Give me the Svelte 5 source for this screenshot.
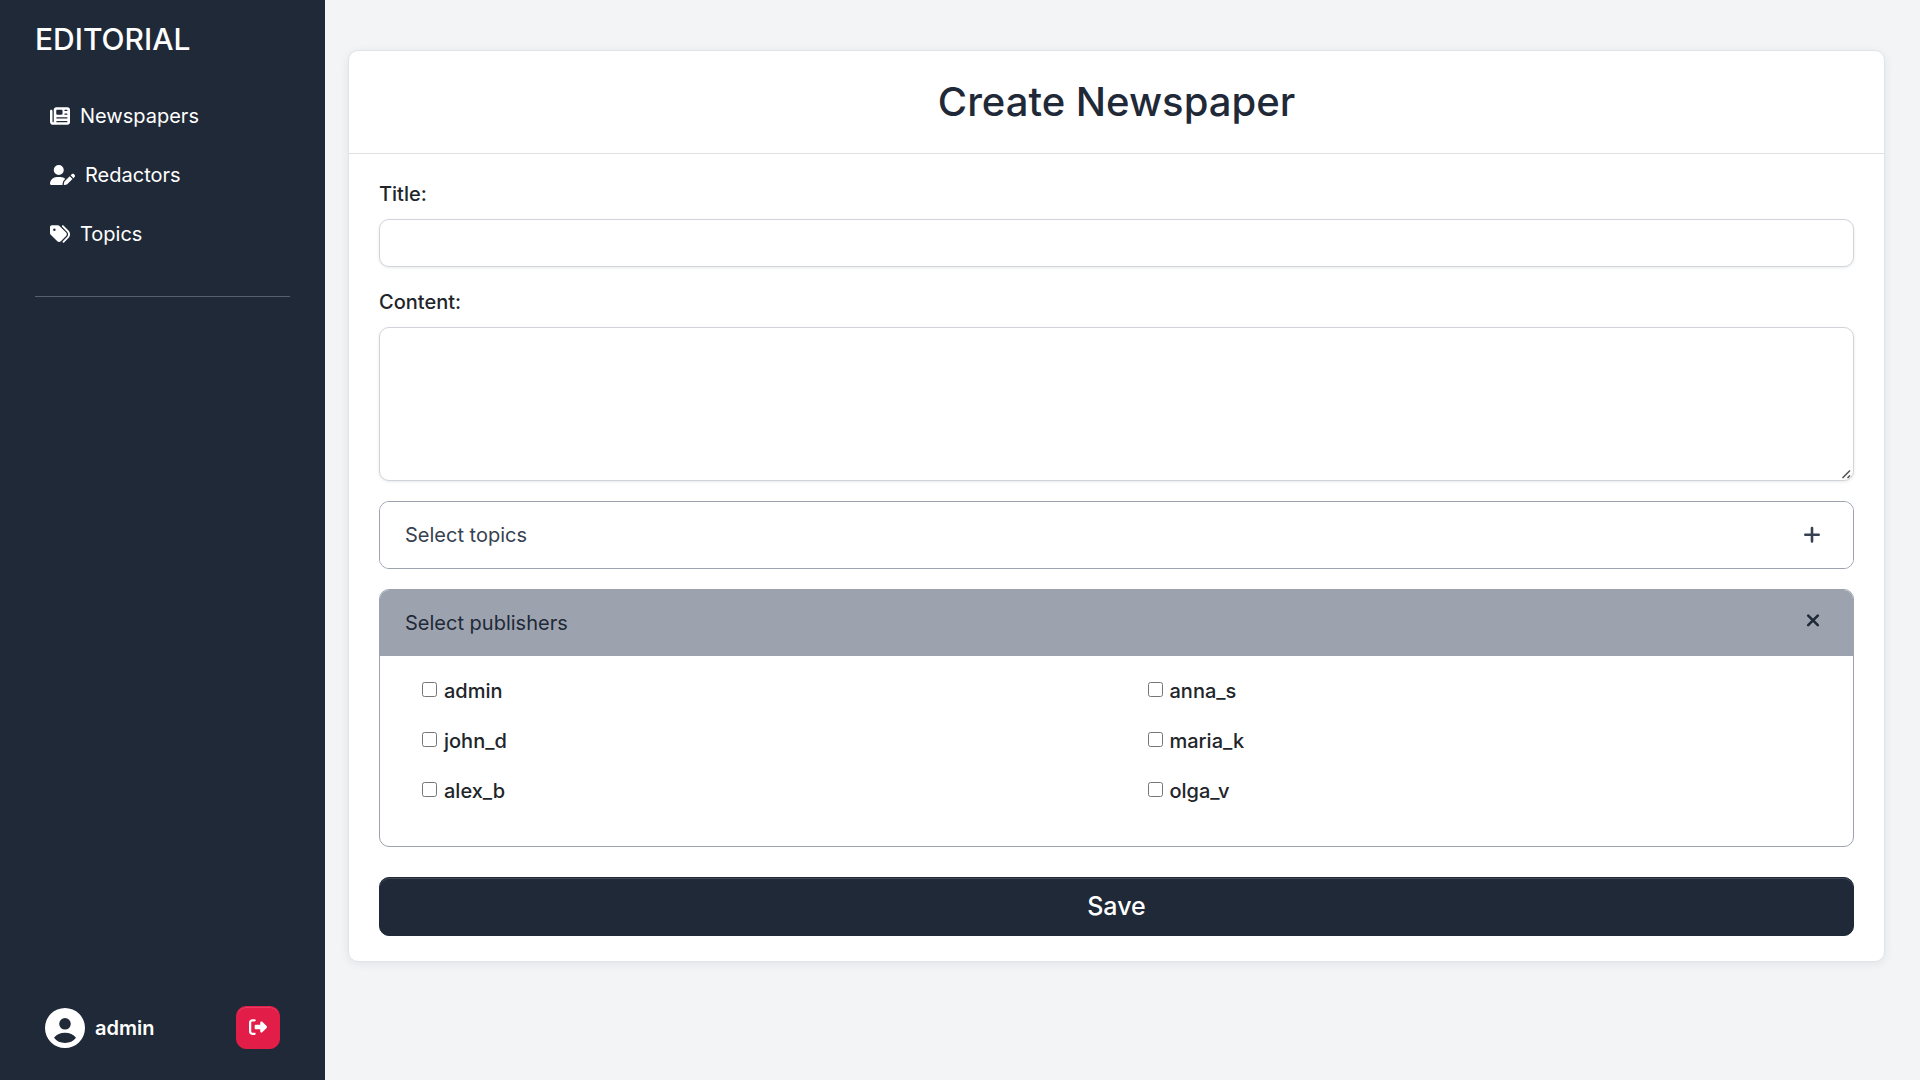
<script>
  const links = [
    { label: 'Newspapers', icon: 'newspaper', box: '0 0 512 512' },
    { label: 'Redactors', icon: 'userPen', box: '0 0 640 512' },
    { label: 'Topics', icon: 'tags', box: '0 0 512 512' }
  ];
  const paths = {
    newspaper:
      'M96 96c0-35.3 28.7-64 64-64H448c35.3 0 64 28.7 64 64V416c0 35.3-28.7 64-64 64H80c-44.2 0-80-35.8-80-80V128c0-17.7 14.3-32 32-32s32 14.3 32 32V400c0 8.8 7.2 16 16 16s16-7.2 16-16V96zm64 24v80c0 13.3 10.7 24 24 24H296c13.3 0 24-10.7 24-24V120c0-13.3-10.7-24-24-24H184c-13.3 0-24 10.7-24 24zm208-8c0 8.8 7.2 16 16 16h48c8.8 0 16-7.2 16-16s-7.2-16-16-16H384c-8.8 0-16 7.2-16 16zm0 96c0 8.8 7.2 16 16 16h48c8.8 0 16-7.2 16-16s-7.2-16-16-16H384c-8.8 0-16 7.2-16 16zM160 304c0 8.8 7.2 16 16 16H432c8.8 0 16-7.2 16-16s-7.2-16-16-16H176c-8.8 0-16 7.2-16 16zm0 96c0 8.8 7.2 16 16 16H432c8.8 0 16-7.2 16-16s-7.2-16-16-16H176c-8.8 0-16 7.2-16 16z',
    userPen:
      'M224 256A128 128 0 1 0 224 0a128 128 0 1 0 0 256zm-45.7 48C79.8 304 0 383.8 0 482.3C0 498.7 13.3 512 29.7 512H322.8c-3.1-8.8-3.7-18.4-1.4-27.8l15-60.1c2.8-11.3 8.6-21.5 16.8-29.7l40.3-40.3c-32.1-31-75.7-50.1-123.9-50.1H178.3zm435.5-68.3c-15.6-15.6-40.9-15.6-56.6 0l-29.4 29.4 71 71 29.4-29.4c15.6-15.6 15.6-40.9 0-56.6l-14.4-14.4zM375.9 417c-4.1 4.1-7 9.2-8.4 14.9l-15 60.1c-1.4 5.5 .2 11.2 4.2 15.2s9.7 5.6 15.2 4.2l60.1-15c5.6-1.4 10.8-4.3 14.9-8.4L576.1 358.7l-71-71L375.9 417z',
    tags:
      'M345 39.1L472.8 168.4c52.4 53 52.4 138.2 0 191.2L360.8 472.9c-9.3 9.4-24.5 9.5-33.9 .2s-9.5-24.5-.2-33.9L438.6 325.9c33.9-34.3 33.9-89.4 0-123.7L310.9 72.9c-9.3-9.4-9.2-24.6 .2-33.9s24.6-9.2 33.9 .2zM0 229.5V80C0 53.5 21.5 32 48 32H197.5c17 0 33.3 6.7 45.3 18.7l168 168c25 25 25 65.5 0 90.5L277.3 442.7c-25 25-65.5 25-90.5 0l-168-168C6.7 262.7 0 246.5 0 229.5zM144 144a32 32 0 1 0 -64 0 32 32 0 1 0 64 0z'
  };
  const publishers = ['admin', 'anna_s', 'john_d', 'maria_k', 'alex_b', 'olga_v'];
  let publishersOpen = $state(true);
</script>

<div class="app">
  <aside class="sidebar">
    <a class="brand" href="#home">EDITORIAL</a>
    <nav>
      {#each links as link}
        <a href={'#' + link.label.toLowerCase()}>
          <svg class:wide={link.icon === 'userPen'} viewBox={link.box} aria-hidden="true"><path d={paths[link.icon]} /></svg>
          <span>{link.label}</span>
        </a>
      {/each}
    </nav>
    <hr />
    <div class="account">
      <a class="user" href="#profile">
        <svg viewBox="0 0 40 40" aria-hidden="true">
          <path fill-rule="evenodd" d="M20 0a20 20 0 1 0 0 40a20 20 0 1 0 0-40zM20 10a5.8 5.8 0 1 1 0 11.6a5.8 5.8 0 1 1 0-11.6zM9 29.8C11.6 26.4 15.5 24.8 20 24.8S28.4 26.4 31 29.8C28.4 33.2 24.6 35 20 35S11.6 33.2 9 29.8z" />
        </svg>
        <span>admin</span>
      </a>
      <button class="logout" type="button" aria-label="Log out">
        <svg viewBox="0 0 512 512" aria-hidden="true">
          <path d="M377.9 105.9L500.7 228.7c7.2 7.2 11.3 17.1 11.3 27.3s-4.1 20.1-11.3 27.3L377.9 406.1c-6.4 6.4-15 9.9-24 9.9c-18.7 0-33.9-15.2-33.9-33.9l0-62.1-128 0c-17.7 0-32-14.3-32-32l0-64c0-17.7 14.3-32 32-32l128 0 0-62.1c0-18.7 15.2-33.9 33.9-33.9c9 0 17.6 3.6 24 9.9zM160 96L96 96c-17.7 0-32 14.3-32 32l0 256c0 17.7 14.3 32 32 32l64 0c17.7 0 32 14.3 32 32s-14.3 32-32 32l-64 0c-53 0-96-43-96-96L0 128C0 75 43 32 96 32l64 0c17.7 0 32 14.3 32 32s-14.3 32-32 32z" />
        </svg>
      </button>
    </div>
  </aside>

  <main>
    <section class="card">
      <header><h1>Create Newspaper</h1></header>
      <form onsubmit={(e) => e.preventDefault()}>
        <div class="field">
          <label for="title">Title:</label>
          <input id="title" class="control" type="text" />
        </div>
        <div class="field">
          <label for="content">Content:</label>
          <textarea id="content" class="control"></textarea>
        </div>
        <div class="panel">
          <button class="toggle" type="button" aria-expanded="false">
            <span>Select topics</span>
            <svg viewBox="0 0 26 26" aria-hidden="true"><path d="M13 6v13.4M6.3 12.7h13.4" /></svg>
          </button>
        </div>
        <div class="panel">
          <button class="toggle" class:open={publishersOpen} type="button" aria-expanded={publishersOpen} onclick={() => (publishersOpen = !publishersOpen)}>
            <span>Select publishers</span>
            <svg viewBox="0 0 26 26" aria-hidden="true">
              <path d={publishersOpen ? 'M9.2 5.6l9.6 9.6M18.8 5.6l-9.6 9.6' : 'M13 6v13.4M6.3 12.7h13.4'} />
            </svg>
          </button>
          {#if publishersOpen}
            <div class="options">
              {#each publishers as name}
                <label><input type="checkbox" value={name} /> {name}</label>
              {/each}
            </div>
          {/if}
        </div>
        <button class="save" type="submit">Save</button>
      </form>
    </section>
  </main>
</div>

<style>
  :global(body) {
    margin: 0;
    background: #f2f4f6;
  }
  .app,
  .app * {
    box-sizing: border-box;
  }
  .app {
    display: flex;
    min-height: 100vh;
    font: 400 20px/30px Inter, sans-serif;
    color: #212529;
  }
  button {
    font: inherit;
    cursor: pointer;
  }
  a {
    color: #fff;
    text-decoration: none;
  }
  .sidebar {
    flex: none;
    display: flex;
    flex-direction: column;
    width: 325px;
    padding: 20px 35px 31px;
    background: #1f2937;
  }
  .brand {
    font-size: 30px;
    line-height: 38px;
    font-weight: 500;
  }
  nav {
    display: flex;
    flex-direction: column;
    gap: 5px;
    margin-top: 31px;
  }
  nav a {
    display: flex;
    align-items: center;
    gap: 10px;
    padding: 12px 15px;
  }
  svg {
    fill: currentColor;
    flex: none;
  }
  nav svg {
    width: 20px;
    height: 20px;
  }
  nav svg.wide {
    width: 25px;
  }
  hr {
    width: 100%;
    height: 1px;
    margin: 35px 0 0;
    border: 0;
    background: #56606e;
  }
  .account {
    display: flex;
    align-items: center;
    justify-content: space-between;
    margin-top: auto;
    padding: 0 10px;
  }
  .user {
    display: flex;
    align-items: center;
    gap: 10px;
    font-weight: 600;
  }
  .user svg {
    width: 40px;
    height: 40px;
  }
  .logout {
    display: grid;
    place-items: center;
    width: 44px;
    height: 43px;
    padding: 0 0 2px;
    border: 1px solid #e11d48;
    border-radius: 10px;
    background: #e11d48;
    color: #fff;
    box-shadow: inset 0 1px 0 rgba(255, 255, 255, 0.15);
  }
  .logout svg {
    width: 18px;
    height: 18px;
  }
  main {
    flex: 1;
    min-width: 0;
    padding: 50px 35px 50px 23px;
  }
  .card {
    border: 1px solid #e0e3e7;
    border-radius: 10px;
    background: #fff;
    box-shadow: 0 2px 10px rgba(31, 41, 55, 0.07);
  }
  header {
    padding: 25px 30px;
    border-bottom: 1px solid #dfe2e5;
  }
  h1 {
    margin: 0;
    font-size: 40px;
    line-height: 52px;
    font-weight: 500;
    text-align: center;
    color: #1f2937;
  }
  form {
    display: flex;
    flex-direction: column;
    gap: 20px;
    padding: 25px 30px;
  }
  label {
    font-weight: 500;
  }
  .field {
    display: flex;
    flex-direction: column;
    gap: 10px;
  }
  .control {
    display: block;
    width: 100%;
    height: 48px;
    padding: 10px 15px;
    border: 1px solid #d1d5db;
    border-radius: 10px;
    background: #fff;
    font: inherit;
    color: inherit;
    box-shadow: 0 1px 3px rgba(31, 41, 55, 0.1);
  }
  textarea.control {
    height: 154px;
    resize: vertical;
  }
  textarea::-webkit-resizer {
    background: url("data:image/svg+xml,%3Csvg xmlns='http://www.w3.org/2000/svg' width='15' height='15'%3E%3Cpath d='M4.5 13L12 5.5M9.5 13L12 10.5' stroke='%23555' stroke-width='1.6' fill='none'/%3E%3C/svg%3E") no-repeat right bottom;
  }
  .panel {
    overflow: hidden;
    border: 1px solid #9ca3af;
    border-radius: 10px;
    background: #fff;
  }
  .toggle {
    display: flex;
    align-items: center;
    justify-content: space-between;
    width: 100%;
    padding: 18px 28px 18px 25px;
    border: 0;
    background: #fff;
    color: #374151;
  }
  .toggle.open {
    background: #9ca3af;
    color: #1f2937;
  }
  .toggle svg {
    width: 26px;
    height: 26px;
    fill: none;
    stroke: currentColor;
    stroke-width: 2.6;
    stroke-linecap: round;
  }
  .options {
    display: grid;
    grid-template-columns: 1fr 1fr;
    gap: 20px;
    padding: 20px 0 40px 42px;
  }
  .options label {
    display: flex;
    align-items: center;
    gap: 7px;
  }
  .options input {
    width: 15px;
    height: 15px;
    margin: 0 0 4px;
  }
  .save {
    margin-top: 10px;
    padding: 14px;
    border: 1px solid #1f2937;
    border-radius: 10px;
    background: #1f2937;
    color: #fff;
    font-size: 25px;
    line-height: 29px;
    font-weight: 500;
    box-shadow: inset 0 1px 0 rgba(255, 255, 255, 0.15);
  }
</style>
